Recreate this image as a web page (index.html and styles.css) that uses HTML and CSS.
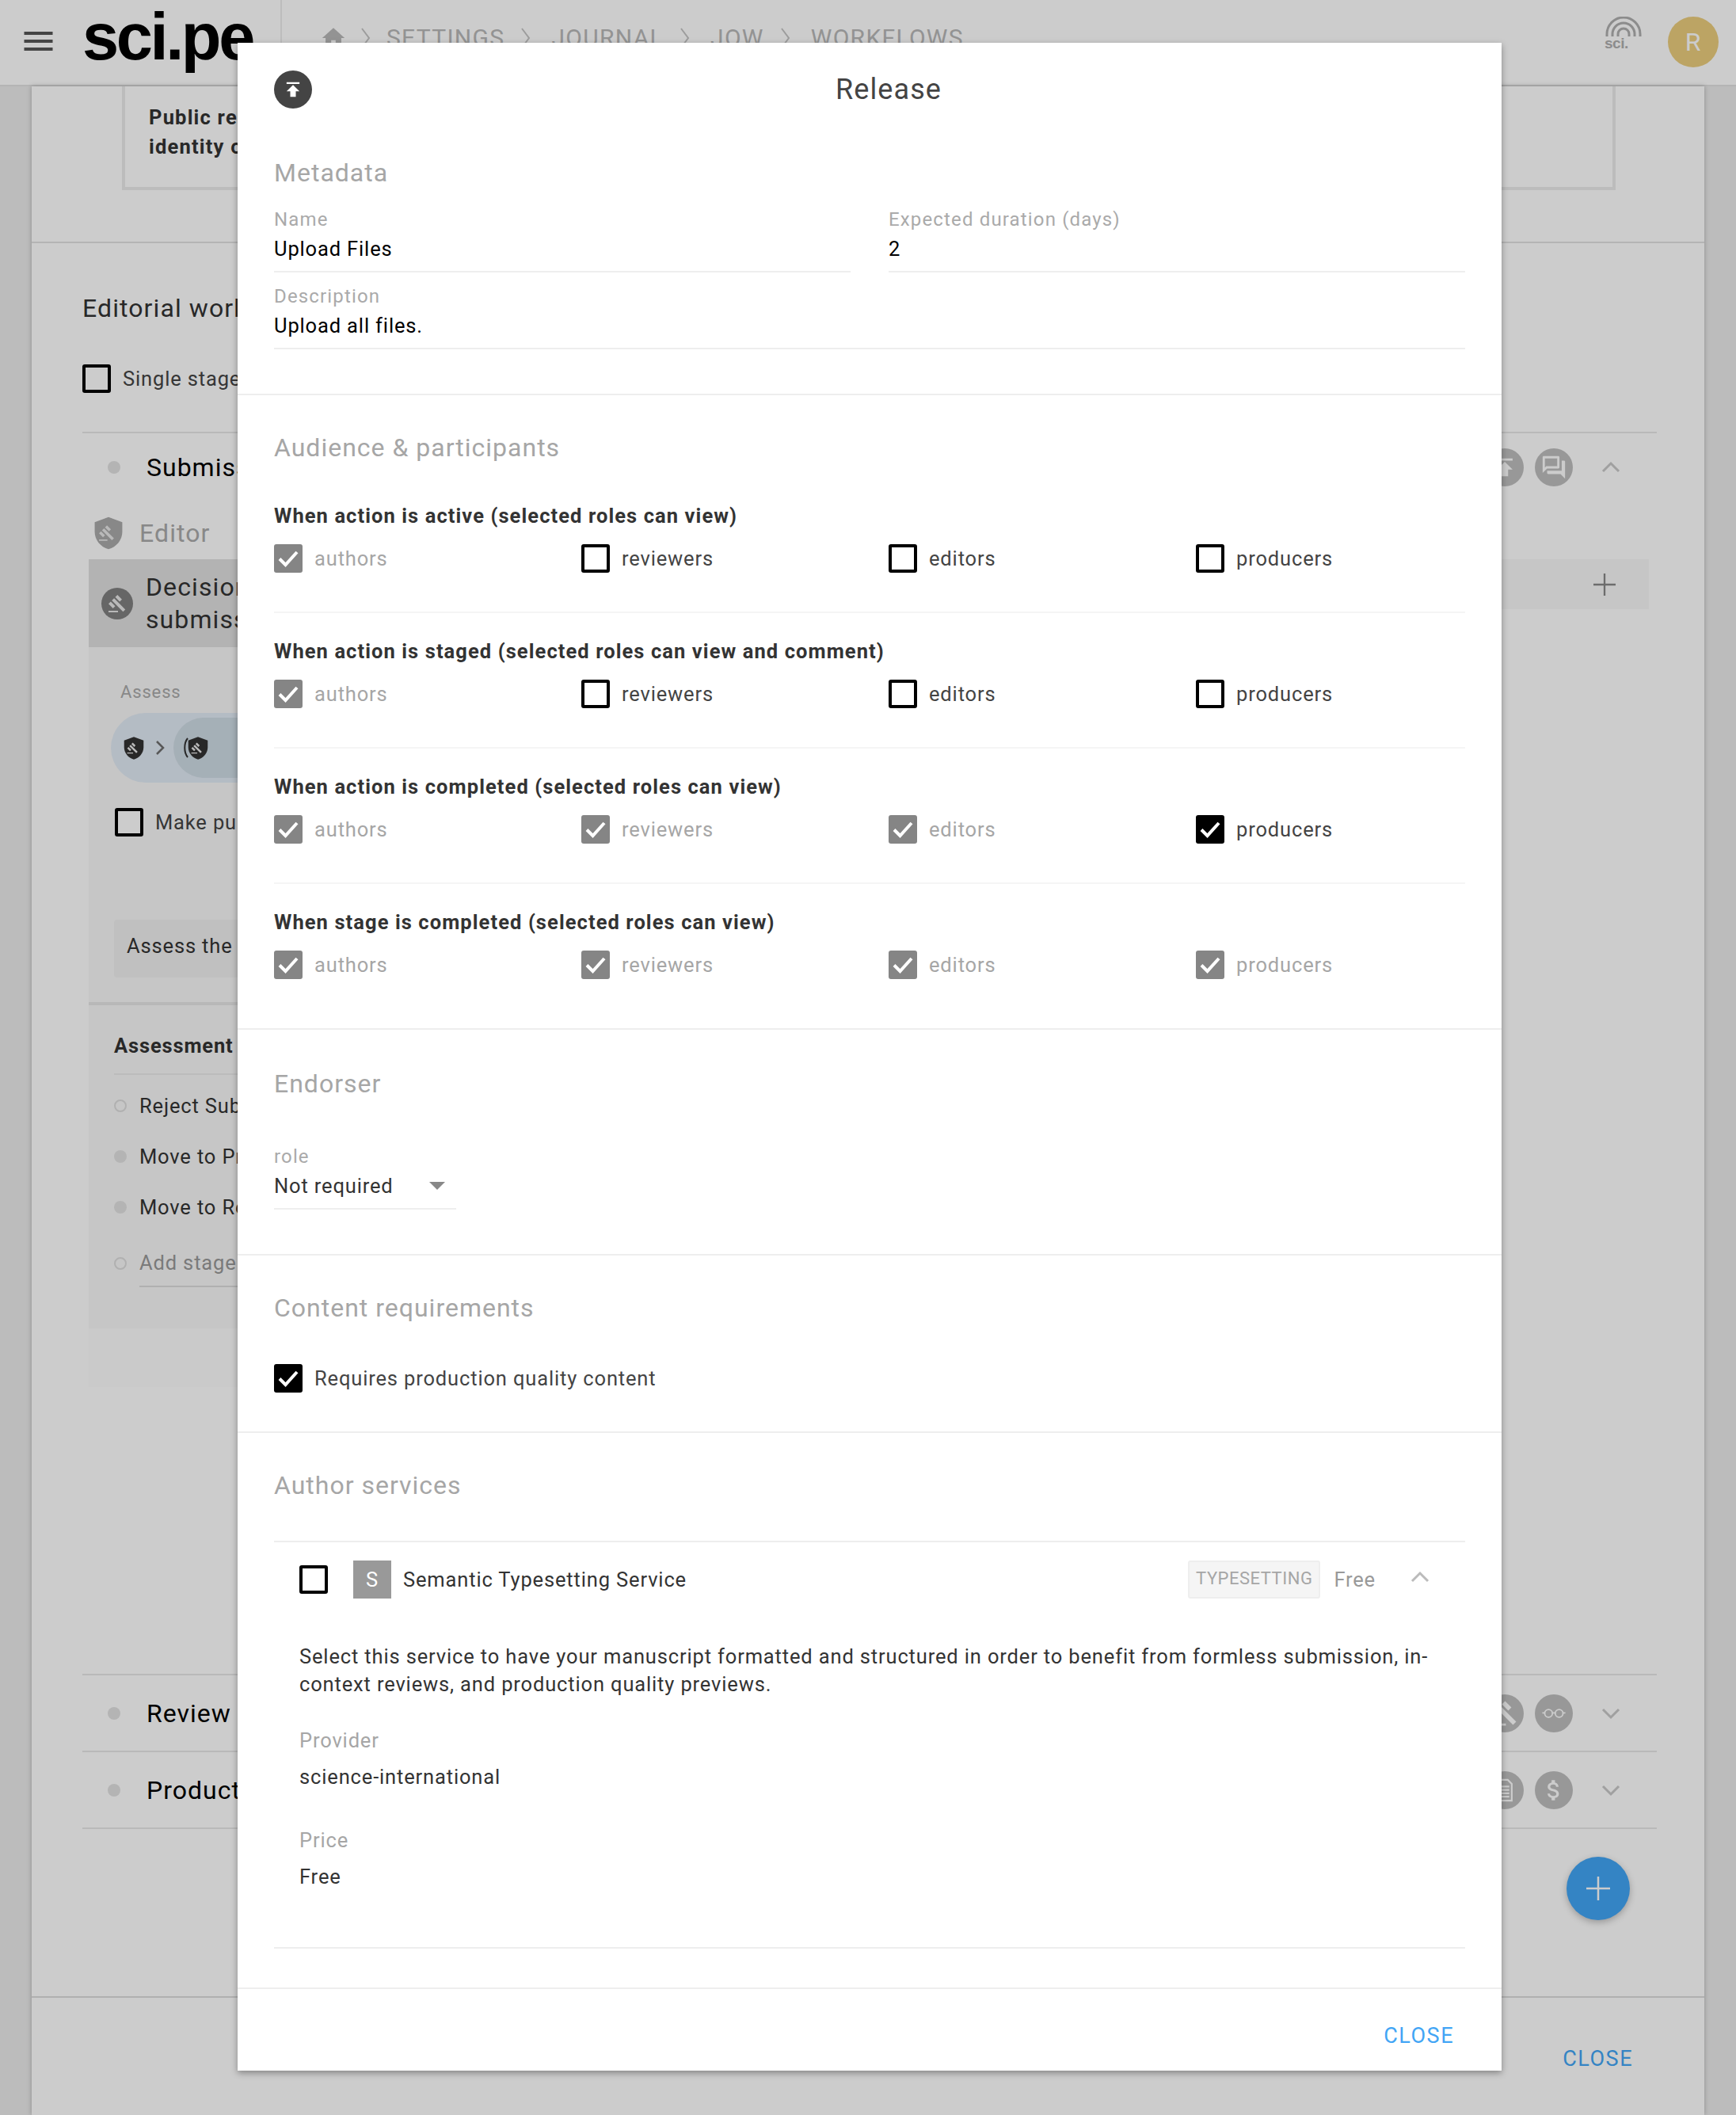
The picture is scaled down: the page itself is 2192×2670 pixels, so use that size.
FILE: index.html
```html
<!DOCTYPE html>
<html lang="en">
<head>
	<meta charset="UTF-8">
	<title>Release</title>
	<link rel="stylesheet" href="styles.css">
</head>
<body>
	<svg class="defs" aria-hidden="true">
		<symbol id="check" viewBox="0 0 36 36"><path d="M7 18.500l7.500 7.500L29 10" fill="none" stroke="#fff" stroke-width="4"/></symbol>
		<symbol id="gavel" viewBox="0 0 24 24"><path d="M1 21h12v2H1v-2zM5.245 8.070l2.830-2.827 14.140 14.142-2.828 2.828L5.245 8.070zM12.317 1l5.657 5.656-2.830 2.830-5.654-5.660L12.317 1zM3.825 9.485l5.657 5.657-2.828 2.828-5.657-5.657 2.828-2.828z"/></symbol>
		<symbol id="shield" viewBox="2 0 20 24"><path d="M12 1L2.500 4.500V11c0 5.600 4 10.600 9.500 12 5.500-1.400 9.500-6.400 9.500-12V4.500z"/><g transform="translate(5 5) scale(.58)" fill="#e8e8e8"><use href="#gavel"/></g></symbol>
		<symbol id="chev-up" viewBox="0 0 24 24"><path d="M2 17L12 7l10 10" fill="none" stroke="currentColor" stroke-width="3"/></symbol>
		<symbol id="chev-down" viewBox="0 0 24 24"><path d="M2 7l10 10L22 7" fill="none" stroke="currentColor" stroke-width="3"/></symbol>
		<symbol id="crumb" viewBox="0 0 13 28"><path d="M2 2l9 12-9 12" fill="none" stroke="#c4c4c4" stroke-width="2"/></symbol>
		<symbol id="publish" viewBox="0 0 24 24"><path d="M5 4v2h14V4H5zm0 10h4v6h6v-6h4l-7-7-7 7z"/></symbol>
		<symbol id="plus" viewBox="0 0 24 24"><path d="M11 0h2v11h11v2H13v11h-2V13H0v-2h11z"/></symbol>
	</svg>

	<div class="page">
		<header class="topbar">
			<svg class="burger" viewBox="0 0 36 24"><path d="M0 0h36v4H0zM0 10h36v4H0zM0 20h36v4H0z"/></svg>
			<div class="logo">sci.pe</div>
			<nav class="crumbs">
				<svg class="home" viewBox="0 0 24 24"><path d="M10 20v-6h4v6h5v-8h3L12 3 2 12h3v8z"/></svg>
				<svg class="sep sep-first"><use href="#crumb"/></svg><a>SETTINGS</a>
				<svg class="sep"><use href="#crumb"/></svg><a>JOURNAL</a>
				<svg class="sep"><use href="#crumb"/></svg><a>JOW</a>
				<svg class="sep"><use href="#crumb"/></svg><a>WORKFLOWS</a>
			</nav>
			<div class="sci-mark">
				<svg viewBox="0 0 48 26"><g fill="none" stroke="#b0b0b0" stroke-width="3"><path d="M3 25V22a21 21 0 0 1 42 0v3"/><path d="M10 25V22a14 14 0 0 1 28 0v3"/><path d="M17 25V22a7 7 0 0 1 14 0v3"/></g></svg>
				<span>sci.</span>
			</div>
			<div class="avatar">R</div>
		</header>

		<main class="panel">
			<section class="intro">
				<div class="intro-box">
					<b>Public release</b><br>
					<b>identity of</b>
				</div>
			</section>

			<section class="workflow">
				<h2>Editorial workflow</h2>
				<label class="check-row bg-check"><span class="cb"></span>Single stage</label>

				<div class="stage stage-open">
					<div class="stage-head">
						<i class="dot"></i><span class="stage-name">Submission</span>
						<div class="stage-tools">
							<span class="disc"><svg><use href="#publish"/></svg></span>
							<span class="disc"><svg viewBox="0 0 24 24"><path d="M15 4v7H5.170l-.590.590-.580.580V4h11m1-2H3c-.550 0-1 .450-1 1v14l4-4h10c.550 0 1-.450 1-1V3c0-.550-.450-1-1-1zm5 4h-2v9H6v2c0 .550.450 1 1 1h11l4 4V7c0-.550-.450-1-1-1z"/></svg></span>
							<svg class="chev"><use href="#chev-up"/></svg>
						</div>
					</div>
					<div class="role"><svg class="role-icon"><use href="#shield"/></svg>Editor</div>
					<div class="columns">
						<div class="action-col">
							<div class="decision">
								<span class="decision-icon"><svg><use href="#gavel"/></svg></span>
								<div>Decision on<br>submission</div>
							</div>
							<div class="assess-label">Assess</div>
							<div class="pill">
								<svg class="pill-shield"><use href="#shield"/></svg>
								<svg class="pill-sep" viewBox="0 0 12 20"><path d="M2 2l8 8-8 8" fill="none" stroke="#6f6f6f" stroke-width="2.500"/></svg>
								<div class="pill-inner">
									<svg class="pill-arc" viewBox="0 0 8 32"><path d="M6 4C1 10 1 22 6 28" fill="none" stroke="#333" stroke-width="2"/></svg>
									<svg class="pill-shield"><use href="#shield"/></svg>
								</div>
							</div>
							<label class="check-row make-public"><span class="cb"></span>Make public</label>
							<div class="assess-box">Assess the submission</div>
							<div class="outcomes">
								<h4>Assessment</h4>
								<div class="outcome"><i class="ring"></i>Reject Submission</div>
								<div class="outcome"><i class="mini-dot"></i>Move to Production</div>
								<div class="outcome"><i class="mini-dot"></i>Move to Review</div>
								<div class="outcome outcome-add"><i class="ring"></i><span>Add stage</span></div>
							</div>
							<div class="action-foot"></div>
						</div>
						<div class="add-col">
							<div class="add-row"><svg class="add-plus"><use href="#plus"/></svg></div>
						</div>
					</div>
				</div>

				<div class="stage">
					<div class="stage-head">
						<i class="dot"></i><span class="stage-name">Review</span>
						<div class="stage-tools">
							<span class="disc"><svg><use href="#gavel"/></svg></span>
							<span class="disc"><svg viewBox="0 0 28 24"><g fill="none" stroke="#fff" stroke-width="1.500"><circle cx="8.500" cy="12" r="4"/><circle cx="19.500" cy="12" r="4"/><path d="M12.500 11.500h3M4.500 11.500H2M23.500 11.500H26"/></g></svg></span>
							<svg class="chev"><use href="#chev-down"/></svg>
						</div>
					</div>
				</div>
				<div class="stage stage-last">
					<div class="stage-head">
						<i class="dot"></i><span class="stage-name">Production</span>
						<div class="stage-tools">
							<span class="disc"><svg viewBox="0 0 24 24"><path d="M5 2h10l4 4v16H5zM6.500 3.500v17h11V6.700l-3.200-3.200zM8 8h8v1.500H8zM8 11h8v1.500H8zM8 14h8v1.500H8zM8 17h8v1.500H8z" fill-rule="evenodd"/></svg></span>
							<span class="disc"><svg viewBox="0 0 24 24"><path d="M11.800 10.900c-2.270-.590-3-1.200-3-2.150 0-1.090 1.010-1.850 2.700-1.850 1.780 0 2.440.850 2.500 2.100h2.210c-.070-1.720-1.120-3.300-3.210-3.810V3h-3v2.160c-1.940.420-3.500 1.680-3.500 3.610 0 2.310 1.910 3.460 4.700 4.130 2.500.600 3 1.480 3 2.410 0 .690-.490 1.790-2.700 1.790-2.060 0-2.870-.920-2.980-2.100h-2.200c.120 2.190 1.760 3.420 3.680 3.830V21h3v-2.150c1.950-.370 3.500-1.500 3.500-3.550 0-2.840-2.430-3.810-4.700-4.400z"/></svg></span>
							<svg class="chev"><use href="#chev-down"/></svg>
						</div>
					</div>
				</div>
			</section>

			<footer class="panel-foot"><a class="btn-close">CLOSE</a></footer>
		</main>

		<button class="fab"><svg><use href="#plus"/></svg></button>
		<div class="scrim"></div>

		<div class="modal">
			<div class="modal-head">
				<span class="modal-icon"><svg><use href="#publish"/></svg></span>
				<h1>Release</h1>
			</div>

			<section class="sect sect-meta">
				<h3>Metadata</h3>
				<div class="field-row">
					<div class="field">
						<label>Name</label>
						<div class="value">Upload Files</div>
					</div>
					<div class="field">
						<label>Expected duration (days)</label>
						<div class="value">2</div>
					</div>
				</div>
				<div class="field field-wide">
					<label>Description</label>
					<div class="value">Upload all files.</div>
				</div>
			</section>

			<section class="sect sect-audience">
				<h3>Audience &amp; participants</h3>
				<div class="group">
					<h5>When action is active (selected roles can view)</h5>
					<div class="roles">
						<label class="check-row locked"><span class="cb on"><svg><use href="#check"/></svg></span>authors</label>
						<label class="check-row"><span class="cb"></span>reviewers</label>
						<label class="check-row"><span class="cb"></span>editors</label>
						<label class="check-row"><span class="cb"></span>producers</label>
					</div>
				</div>
				<div class="group">
					<h5>When action is staged (selected roles can view and comment)</h5>
					<div class="roles">
						<label class="check-row locked"><span class="cb on"><svg><use href="#check"/></svg></span>authors</label>
						<label class="check-row"><span class="cb"></span>reviewers</label>
						<label class="check-row"><span class="cb"></span>editors</label>
						<label class="check-row"><span class="cb"></span>producers</label>
					</div>
				</div>
				<div class="group">
					<h5>When action is completed (selected roles can view)</h5>
					<div class="roles">
						<label class="check-row locked"><span class="cb on"><svg><use href="#check"/></svg></span>authors</label>
						<label class="check-row locked"><span class="cb on"><svg><use href="#check"/></svg></span>reviewers</label>
						<label class="check-row locked"><span class="cb on"><svg><use href="#check"/></svg></span>editors</label>
						<label class="check-row"><span class="cb on"><svg><use href="#check"/></svg></span>producers</label>
					</div>
				</div>
				<div class="group">
					<h5>When stage is completed (selected roles can view)</h5>
					<div class="roles">
						<label class="check-row locked"><span class="cb on"><svg><use href="#check"/></svg></span>authors</label>
						<label class="check-row locked"><span class="cb on"><svg><use href="#check"/></svg></span>reviewers</label>
						<label class="check-row locked"><span class="cb on"><svg><use href="#check"/></svg></span>editors</label>
						<label class="check-row locked"><span class="cb on"><svg><use href="#check"/></svg></span>producers</label>
					</div>
				</div>
			</section>

			<section class="sect sect-endorser">
				<h3>Endorser</h3>
				<div class="select">
					<label>role</label>
					<div class="value select-value">Not required<i class="caret"></i></div>
				</div>
			</section>

			<section class="sect sect-content">
				<h3>Content requirements</h3>
				<label class="check-row"><span class="cb on"><svg><use href="#check"/></svg></span>Requires production quality content</label>
			</section>

			<section class="sect sect-services">
				<h3>Author services</h3>
				<div class="service">
					<div class="service-head">
						<span class="cb"></span>
						<span class="service-badge">S</span>
						<span class="service-name">Semantic Typesetting Service</span>
						<span class="service-tag">TYPESETTING</span>
						<span class="service-price">Free</span>
						<svg class="service-chev"><use href="#chev-up"/></svg>
					</div>
					<p>Select this service to have your manuscript formatted and structured in order to benefit from formless submission, in-context reviews, and production quality previews.</p>
					<div class="service-label">Provider</div>
					<div class="service-value">science-international</div>
					<div class="service-label service-label-next">Price</div>
					<div class="service-value">Free</div>
				</div>
			</section>

			<div class="modal-foot"><a class="btn-close">CLOSE</a></div>
		</div>
	</div>
</body>
</html>
```

FILE: styles.css
```css
* {
	box-sizing: border-box;
}

body {
	margin: 0;
	font-family: Roboto, "Liberation Sans", sans-serif;
	font-size: 25.500px;
	letter-spacing: .85px;
	color: #333;
}

h1, h2, h3, h4, h5, p {
	margin: 0;
	font-weight: 400;
}

.defs {
	position: absolute;
	width: 0;
	height: 0;
}

.page {
	position: relative;
	width: 2192px;
	height: 2670px;
	overflow: hidden;
	background: #ebebeb;
}

/* top bar */
.topbar {
	height: 109px;
	display: flex;
	align-items: center;
	background: #fff;
	border-bottom: 2px solid #e2e2e2;
}

.burger {
	width: 37px;
	height: 24px;
	margin: 0 0 3px 30px;
	fill: #555;
}

.logo {
	width: 289px;
	height: 107px;
	padding-left: 37px;
	font-family: "Liberation Sans", sans-serif;
	font-weight: 700;
	font-size: 83px;
	line-height: 93px;
	letter-spacing: -3.400px;
	color: #000;
	border-right: 2px solid #ededed;
}

.crumbs {
	display: flex;
	align-items: center;
	height: 107px;
	padding: 0 0 12px 48px;
	font-size: 30px;
	letter-spacing: 1.300px;
	color: #b8b8b8;
}

.home {
	width: 34px;
	height: 34px;
	fill: #b8b8b8;
}

.sep {
	width: 13px;
	height: 28px;
	margin: 0 26px 0 20px;
}

.sep-first {
	margin: 0 20px 0 17px;
}

.sci-mark {
	margin-left: auto;
	width: 48px;
	height: 42px;
	margin-bottom: 24px;
	display: flex;
	flex-direction: column;
	font-family: "Liberation Sans", sans-serif;
	font-size: 19px;
	font-weight: 700;
	line-height: 16px;
	letter-spacing: -.5px;
	color: #b0b0b0;
}

.avatar {
	width: 64px;
	height: 64px;
	margin: 0 22px 2px 32px;
	border-radius: 50%;
	background: #ecce7e;
	color: #fff;
	font-size: 32px;
	text-align: center;
	line-height: 64px;
}

/* page behind the dialog */
.panel {
	height: 2561px;
	margin: 0 40px;
	display: flex;
	flex-direction: column;
	background: #fff;
	box-shadow: 0 0 6px rgba(0, 0, 0, .25);
}

.intro {
	padding: 0 112px 65px 114px;
	border-bottom: 2px solid #e2e2e2;
}

.intro-box {
	height: 131px;
	padding: 21px 30px 0;
	border: 4px solid #ececec;
	border-top: 0;
	line-height: 37px;
	letter-spacing: 1.200px;
}

.intro-box b {
	font-weight: 700;
}

.workflow {
	padding: 62px 60px 0 64px;
}

.workflow h2 {
	font-size: 32px;
	line-height: 40px;
	letter-spacing: 1.100px;
	margin-bottom: 51px;
}

.bg-check {
	margin-bottom: 49px;
}

.stage {
	border-top: 2px solid #e8e8e8;
}

.stage-last {
	border-bottom: 2px solid #e8e8e8;
}

.stage-open {
	height: 1568px;
}

.stage-head {
	height: 95px;
	display: flex;
	align-items: center;
	padding: 0 46px 0 32px;
	font-size: 32px;
	letter-spacing: 1px;
	color: #000;
}

.stage-open .stage-head {
	height: 86px;
}

.dot {
	width: 16px;
	height: 16px;
	margin-right: 33px;
	border-radius: 50%;
	background: #e2e2e2;
}

.stage-tools {
	margin-left: auto;
	display: flex;
	align-items: center;
	gap: 14px;
}

.disc {
	width: 48px;
	height: 48px;
	padding: 7px;
	border-radius: 50%;
	background: #bfbfbf;
	fill: #fff;
}

.disc svg {
	display: block;
	width: 34px;
	height: 34px;
}

.chev {
	width: 24px;
	height: 24px;
	margin-left: 22px;
	color: #c8c8c8;
}

.role {
	height: 46px;
	margin: 17px 0 10px 14px;
	display: flex;
	align-items: center;
	font-size: 32px;
	letter-spacing: 1.100px;
	color: #aaa;
}

.role-icon {
	width: 38px;
	height: 44px;
	margin-right: 20px;
	fill: #aaa;
}

.columns {
	display: flex;
	margin: 0 10px 0 8px;
}

.action-col {
	width: 800px;
	background: #f8f8f8;
}

.decision {
	height: 111px;
	padding-left: 16px;
	display: flex;
	align-items: center;
	gap: 16px;
	background: #e0e0e0;
	font-size: 32px;
	letter-spacing: 1.100px;
	line-height: 41px;
}

.decision-icon {
	width: 40px;
	height: 40px;
	padding: 8px;
	border-radius: 50%;
	background: #808080;
	fill: #e8e8e8;
}

.decision-icon svg {
	display: block;
	width: 24px;
	height: 24px;
}

.assess-label {
	margin: 42px 0 11px 40px;
	font-size: 22px;
	line-height: 30px;
	color: #aaa;
}

.pill {
	width: 640px;
	height: 88px;
	margin-left: 28px;
	padding: 6px 0 6px 16px;
	display: flex;
	align-items: center;
	border-radius: 44px;
	background: #e2ebf5;
}

.pill-shield {
	width: 26px;
	height: 31px;
	fill: #333;
}

.pill-sep {
	width: 12px;
	height: 20px;
	margin: 0 11px 0 14px;
}

.pill-arc {
	width: 8px;
	height: 32px;
	margin-right: -2px;
}

.pill-inner {
	flex: 1;
	height: 76px;
	padding-left: 12px;
	display: flex;
	align-items: center;
	border-radius: 38px;
	background: #cfdce5;
}

.make-public {
	margin: 32px 0 0 33px;
}

.assess-box {
	height: 73px;
	margin: 105px 0 0 32px;
	padding-left: 16px;
	border-radius: 4px;
	background: #f0f0f0;
	line-height: 67px;
}

.outcomes {
	margin-top: 31px;
	padding: 36px 0 0 32px;
	border-top: 4px solid #e6e6e6;
}

.outcomes h4 {
	padding-bottom: 20px;
	border-bottom: 2px solid #ececec;
	font-weight: 700;
	line-height: 30px;
	font-size: 25.500px;
}

.outcome {
	height: 64px;
	display: flex;
	align-items: center;
	gap: 16px;
}

.outcomes h4 + .outcome {
	margin-top: 7px;
}

.outcome-add {
	margin-top: 7px;
	color: #999;
}

.outcome-add span {
	flex: 1;
	line-height: 58px;
	border-bottom: 2px solid #ddd;
}

.ring, .mini-dot {
	width: 16px;
	height: 16px;
	border-radius: 50%;
	border: 2px solid #ddd;
}

.mini-dot {
	background: #e2e2e2;
	border: 0;
}

.action-foot {
	height: 74px;
	margin-top: 50px;
	background: #fdfdfd;
}

.add-col {
	flex: 1;
}

.add-row {
	height: 63px;
	display: flex;
	align-items: center;
	justify-content: flex-end;
	padding-right: 42px;
	background: #f8f8f8;
}

.add-plus {
	width: 28px;
	height: 28px;
	fill: #888;
}

.panel-foot {
	margin-top: auto;
	height: 150px;
	padding: 59px 90px 0 0;
	border-top: 2px solid #dcdcdc;
	text-align: right;
}

.btn-close {
	font-size: 27px;
	letter-spacing: 1.500px;
	line-height: 36px;
	color: #42a5f5;
}

.fab {
	position: absolute;
	left: 1978px;
	top: 2344px;
	width: 80px;
	height: 80px;
	padding: 25px;
	border: 0;
	border-radius: 50%;
	background: #42a5f5;
	fill: #fff;
	box-shadow: 0 3px 8px rgba(0, 0, 0, .25);
}

.fab svg {
	display: block;
	width: 30px;
	height: 30px;
}

.scrim {
	position: absolute;
	inset: 0;
	background: rgba(0, 0, 0, .2);
}

/* checkbox */
.check-row {
	display: flex;
	align-items: center;
	gap: 15px;
	height: 36px;
	color: #444;
}

.cb {
	flex: none;
	width: 36px;
	height: 36px;
	border: 4px solid #000;
	border-radius: 3px;
	background: #fff;
}

.cb.on {
	border: 0;
	background: #000;
}

.cb svg {
	display: block;
	width: 36px;
	height: 36px;
}

.locked {
	color: #a6a6a6;
}

.locked .cb {
	background: #858585;
}

/* dialog */
.modal {
	position: absolute;
	left: 300px;
	top: 54px;
	width: 1596px;
	height: 2560px;
	display: flex;
	flex-direction: column;
	background: #fff;
	box-shadow: 0 3px 8px rgba(0, 0, 0, .35);
}

.modal-head {
	display: flex;
	align-items: center;
	padding: 34px 46px 0;
}

.modal-icon {
	flex: none;
	width: 48px;
	height: 48px;
	padding: 10px;
	border-radius: 50%;
	background: #444;
	fill: #fff;
}

.modal-icon svg {
	display: block;
	width: 28px;
	height: 28px;
}

.modal-head h1 {
	flex: 1;
	text-align: center;
	font-size: 36px;
	line-height: 50px;
	letter-spacing: 1.100px;
	color: #444;
}

.sect {
	padding: 46px 46px 0;
	border-bottom: 2px solid #eee;
}

.sect h3 {
	font-size: 32px;
	line-height: 40px;
	letter-spacing: 1px;
	color: #a6a6a6;
}

.sect-meta {
	padding-top: 60px;
	padding-bottom: 56px;
}

.field-row {
	display: flex;
	gap: 48px;
	margin-top: 24px;
}

.field {
	flex: 1;
}

.field-wide {
	margin-top: 15px;
}

.field label, .select label {
	display: block;
	font-size: 24px;
	letter-spacing: 1.150px;
	line-height: 30px;
	margin-bottom: 4px;
	color: #aaa;
}

.value {
	padding-bottom: 10px;
	border-bottom: 2px solid #eee;
	line-height: 36px;
	color: #000;
}

.sect-audience {
	padding-bottom: 13px;
}

.group {
	padding: 33px 0 49px;
	border-top: 2px solid #f5f5f5;
}

.sect-audience h3 {
	margin-bottom: 18px;
}

.group:first-of-type {
	border-top: 0;
}

.group h5 {
	font-size: 25.500px;
	font-weight: 700;
	letter-spacing: 1.080px;
	line-height: 30px;
	margin-bottom: 21px;
}

.roles {
	display: grid;
	grid-template-columns: repeat(4, 1fr);
	gap: 48px;
}

.sect-endorser {
	padding-top: 48px;
	padding-bottom: 56px;
}

.select {
	width: 230px;
	margin-top: 57px;
}

.select-value {
	display: flex;
	align-items: center;
	justify-content: space-between;
	padding-right: 14px;
	color: #333;
}

.caret {
	width: 0;
	height: 0;
	border-left: 10px solid transparent;
	border-right: 10px solid transparent;
	border-top: 10px solid #888;
}

.sect-content {
	padding-bottom: 49px;
}

.sect-content h3 {
	margin-bottom: 51px;
}

.sect-services {
	border-bottom: 0;
}

.service {
	margin-top: 50px;
	padding: 23px 32px 71px;
	border-top: 2px solid #eee;
	border-bottom: 2px solid #eee;
}

.service-head {
	display: flex;
	align-items: center;
	height: 48px;
}

.service-badge {
	width: 48px;
	height: 48px;
	margin: 0 15px 0 32px;
	background: #999;
	color: #fff;
	text-align: center;
	line-height: 48px;
}

.service-tag {
	margin-left: auto;
	height: 48px;
	padding: 0 8px;
	border: 2px solid #eee;
	border-radius: 3px;
	background: #f5f5f5;
	color: #a6a6a6;
	font-size: 22px;
	letter-spacing: .5px;
	line-height: 42px;
}

.service-price {
	margin-left: 17px;
	color: #999;
}

.service-chev {
	width: 24px;
	height: 24px;
	margin: 0 13px 6px 44px;
	color: #bbb;
}

.service p {
	margin-top: 56px;
	line-height: 35px;
}

.service-label {
	margin-top: 38px;
	line-height: 30px;
	color: #a6a6a6;
}

.service-label-next {
	margin-top: 47px;
}

.service-value {
	margin-top: 13px;
	line-height: 36px;
}

.modal-foot {
	margin-top: 49px;
	padding: 41px 60px 0 0;
	border-top: 2px solid #eee;
	text-align: right;
}
```
